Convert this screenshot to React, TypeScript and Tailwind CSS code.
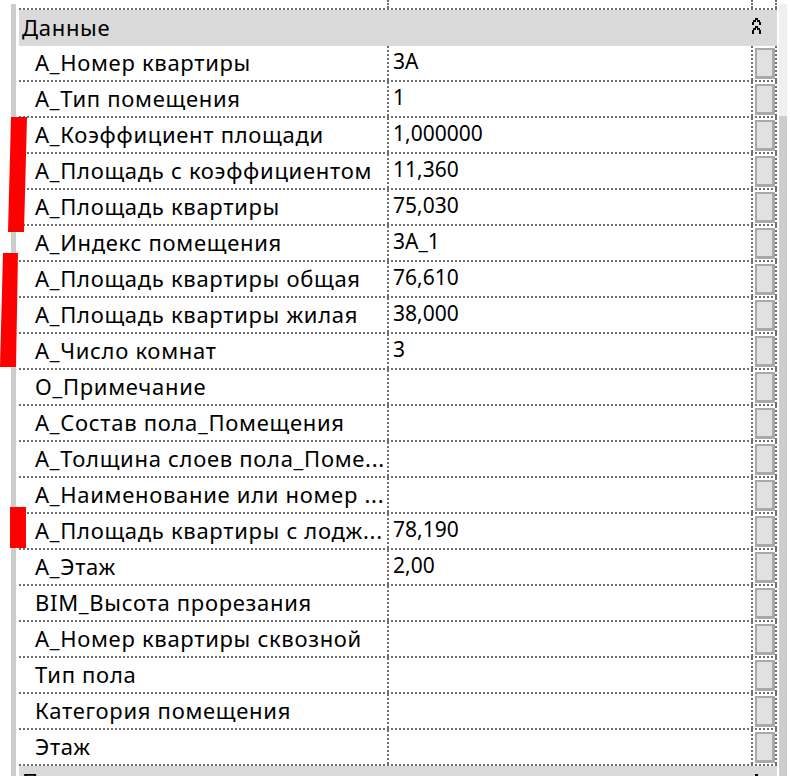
import React from "react";

const rows: [string, string][] = [
  ["А_Номер квартиры", "3А"],
  ["А_Тип помещения", "1"],
  ["А_Коэффициент площади", "1,000000"],
  ["А_Площадь с коэффициентом", "11,360"],
  ["А_Площадь квартиры", "75,030"],
  ["А_Индекс помещения", "3А_1"],
  ["А_Площадь квартиры общая", "76,610"],
  ["А_Площадь квартиры жилая", "38,000"],
  ["А_Число комнат", "3"],
  ["О_Примечание", ""],
  ["А_Состав пола_Помещения", ""],
  ["А_Толщина слоев пола_Поме...", ""],
  ["А_Наименование или номер ...", ""],
  ["А_Площадь квартиры с лодж...", "78,190"],
  ["А_Этаж", "2,00"],
  ["BIM_Высота прорезания", ""],
  ["А_Номер квартиры сквозной", ""],
  ["Тип пола", ""],
  ["Категория помещения", ""],
  ["Этаж", ""],
];

function Chevron() {
  return (
    <svg width="9" height="16" viewBox="0 0 9 16" className="block shrink-0 w-[9px] h-[16px]" shapeRendering="crispEdges">
      <g fill="#000">
        <rect x="3" y="0" width="3" height="2" />
        <rect x="1" y="2" width="3" height="2" />
        <rect x="5" y="2" width="3" height="2" />
        <rect x="0" y="4" width="2" height="3" />
        <rect x="7" y="4" width="2" height="3" />
        <rect x="3" y="8" width="3" height="2" />
        <rect x="1" y="10" width="3" height="2" />
        <rect x="5" y="10" width="3" height="2" />
        <rect x="0" y="12" width="2" height="4" />
        <rect x="7" y="12" width="2" height="4" />
      </g>
    </svg>
  );
}

function Header({ title, lift }: { title: string; lift?: boolean }) {
  return (
    <div className="h-[36px] shrink-0 bg-[#dadada] flex items-start justify-between pl-[3px] pr-[16px]">
      <span
        className={
          lift
            ? "leading-[36px] whitespace-nowrap tracking-[0.7px] text-[22px] -mt-[3px]"
            : "leading-[36px] whitespace-nowrap tracking-[0.7px] text-[22px] -mt-[1px]"
        }
      >
        {title}
      </span>
      <div className="pt-[8px]">
        <Chevron />
      </div>
    </div>
  );
}

function Row({ name, value }: { name: string; value: string }) {
  return (
    <div className="h-[36px] shrink-0 flex border-b-2 border-dotted border-[#6f6f6f]">
      <div className="w-[370px] shrink-0 border-r-2 border-dotted border-[#6f6f6f] pl-[16px] pb-[2px] flex items-center overflow-hidden whitespace-nowrap text-[22px] tracking-[0.7px]">
        {name}
      </div>
      <div className="w-[364px] shrink-0 border-r-2 border-dotted border-[#6f6f6f] pl-[4px] pb-[2px] flex items-center overflow-hidden whitespace-nowrap">
        {value}
      </div>
      <div className="w-[24px] shrink-0 border-r-2 border-dotted border-[#6f6f6f]">
        <div className="ml-[2px] mt-[2px] w-[20px] h-[31px] bg-[#e1e1e1] border-solid border-[#a9a9a9] border-l-2 border-t-2 border-r-[3px] border-b-[3px]" />
      </div>
    </div>
  );
}

export default function App() {
  return (
    <div className="w-[790px] h-[783px] bg-white relative overflow-hidden flex font-['Noto_Sans',sans-serif] text-[21px] text-black">
      <div className="w-[19px] shrink-0 pl-[11px] pt-[4px]">
        <div className="w-[5px] h-[772px] bg-[#cdcdcd]" />
      </div>
      <div className="w-[758px] h-[776px] shrink-0 flex flex-col overflow-hidden">
        <div className="h-[10px] shrink-0 flex border-b-2 border-dotted border-[#6f6f6f]">
          <div className="w-[370px] shrink-0 border-r-2 border-dotted border-[#6f6f6f]" />
          <div className="w-[364px] shrink-0 border-r-2 border-dotted border-[#6f6f6f]" />
          <div className="w-[24px] shrink-0 border-r-2 border-dotted border-[#6f6f6f]" />
        </div>
        <Header title="Данные" />
        {rows.map(([n, v], i) => (
          <Row key={i} name={n} value={v} />
        ))}
        <Header title="Прочее" lift />
      </div>
      <div className="w-[2px] shrink-0" />
      <div className="w-[8px] shrink-0 pt-[4px] flex flex-col h-[776px]">
        <div className="h-[112px] bg-[#f0f0f0]" />
        <div className="flex-1 bg-[#cdcdcd]" />
      </div>
      <svg className="absolute left-0 top-0 pointer-events-none" width="790" height="783">
        <polygon points="11,117 27,117 24,232 8,232" fill="#ff0000" />
        <polygon points="3,253 18,253 16,367 0,367" fill="#ff0000" />
        <polygon points="10,507 26,507 26,548 10,548" fill="#ff0000" />
      </svg>
    </div>
  );
}
